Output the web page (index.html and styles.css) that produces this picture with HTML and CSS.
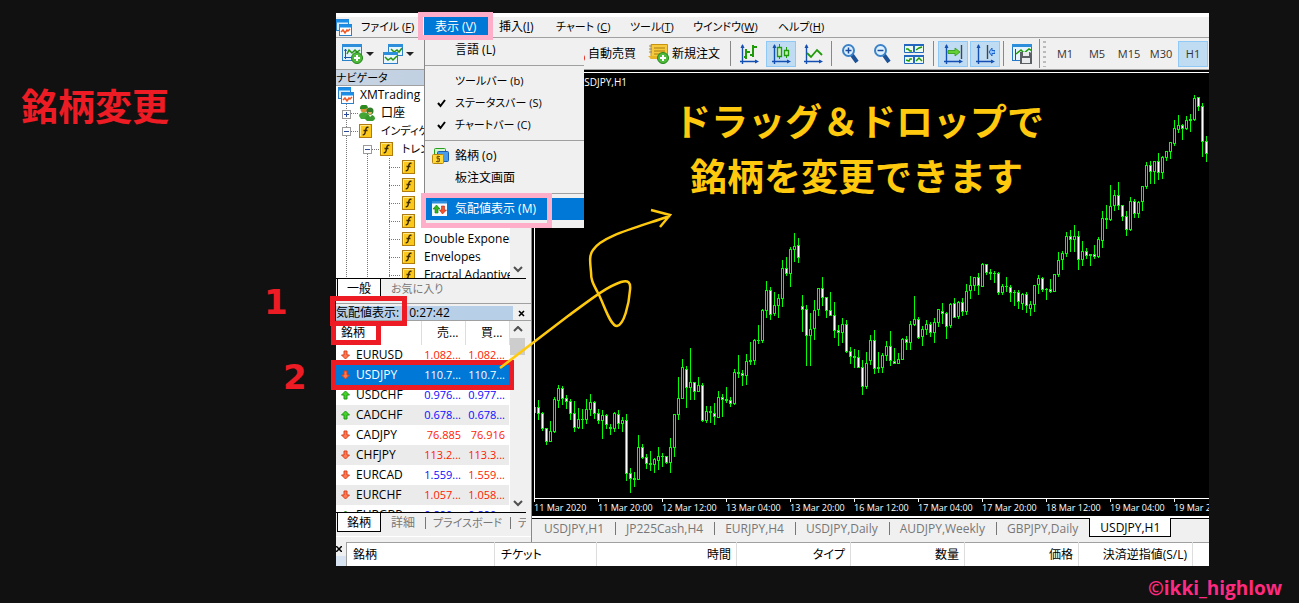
FILE: index.html
```html
<!DOCTYPE html>
<html lang="ja">
<head>
<meta charset="utf-8">
<title>銘柄変更</title>
<link rel="stylesheet" href="styles.css">
</head>
<body>
<svg class="defs" width="0" height="0" aria-hidden="true">
  <symbol id="i-f" viewBox="0 0 13 14"><rect x=".5" y=".5" width="12" height="13" fill="#fbc91c" stroke="#b07c10"/><path d="M1.5 12V1.500H11" fill="none" stroke="#ffe98a"/><path d="M9.500 3.500c-2-1-2.500.5-3 3.200-.4 2.800-.8 4.500-2.800 3.900M4.500 6.500h4" fill="none" stroke="#3a2a10" stroke-width="1.400"/></symbol>
  <symbol id="i-app" viewBox="0 0 16 17"><rect x=".5" y=".5" width="12" height="11" fill="#d6ecfb" stroke="#2d7fc8"/><path d="M0 2h13" stroke="#1b8ee8" stroke-width="3"/><rect x="3.500" y="5.500" width="12" height="11" fill="#fff" stroke="#2d7fc8"/><path d="M3 7h13" stroke="#1b8ee8" stroke-width="3"/><path d="M5 13l2-2 2 3 2-3 1 1 2-2" fill="none" stroke="#ef5a28" stroke-width="1.500"/></symbol>
  <symbol id="i-people" viewBox="0 0 16 16"><circle cx="5" cy="4" r="3.500" fill="#d9912f"/><path d="M1 4a4 4 0 018-1L6 4z" fill="#2d8a22"/><path d="M0 11c0-5 9-5 10 0l-2 3H2z" fill="#45a636"/><circle cx="11" cy="6" r="3.500" fill="#2f7e27"/><path d="M9 7h4l-1 3h-2z" fill="#eab367"/><path d="M6 14c0-6 10-6 10 0l-2 2H8z" fill="#3b9a2e"/><path d="M10 10l1 2 2-2" fill="#fff"/></symbol>
  <symbol id="i-down" viewBox="0 0 9 10"><path d="M3 1h3v4h2.500L4.500 9 .5 5H3z" fill="#ff7a52" stroke="#d8401c"/></symbol>
  <symbol id="i-up" viewBox="0 0 9 10"><path d="M3 9h3V5h2.500L4.500 1 .5 5H3z" fill="#45d02c" stroke="#1f9a12"/></symbol>
  <symbol id="i-plus" viewBox="0 0 12 12"><circle cx="6" cy="6" r="5.500" fill="#4fba3c" stroke="#24871a"/><path d="M6 3v6M3 6h6" stroke="#fff" stroke-width="2"/></symbol>
  <symbol id="i-axes" viewBox="0 0 20 20"><path d="M3.500 1v19M1 17.500h17" fill="none" stroke="#1450b4" stroke-width="1.400"/><path d="M1.500 4l2-4 2 4zM16 15.500l4 2-4 2z" fill="#1450b4"/></symbol>
</svg>
<div class="stage">
  <main class="app">
    <nav class="menubar">
      <svg width="16" height="17"><use href="#i-app"/></svg>
      <button class="kana">ファイル (<u>F</u>)</button><button class="open">表示 (<u>V</u>)</button><button>挿入(<u>I</u>)</button><button class="kana">チャート (<u>C</u>)</button><button class="kana">ツール(<u>T</u>)</button><button class="kana">ウインドウ(<u>W</u>)</button><button class="kana">ヘルプ(<u>H</u>)</button>
    </nav>
    <div class="toolbar">
      <button class="drop" aria-label="新規チャート"><svg width="21" height="20" viewBox="0 0 21 20"><rect x=".5" y=".5" width="19" height="16" fill="#dff1fc" stroke="#2d7fc8"/><path d="M0 1.500h20" stroke="#2d8fdc" stroke-width="3"/><path d="M3.500 5v10M2 13.500h12M2.500 7l1-2 1 2" fill="none" stroke="#1c5aa8"/><path d="M5 10l2-4 3 3 3-3 2 2 3-2" fill="none" stroke="#2a9410" stroke-width="1.500"/><use href="#i-plus" x="9" y="8" width="12" height="12"/></svg><i class="caret"></i></button>
      <button class="drop" aria-label="チャート切替"><svg width="20" height="20" viewBox="0 0 20 20"><rect x="5.500" y=".5" width="14" height="11" fill="#e9f6fd" stroke="#2d7fc8"/><path d="M5 1.500h15" stroke="#2d8fdc" stroke-width="3"/><path d="M8 5l3 3 3-2 2 2 3-4" fill="none" stroke="#2a9410" stroke-width="1.500"/><rect x=".5" y="8.500" width="14" height="11" fill="#e9f6fd" stroke="#2d7fc8"/><path d="M0 9.500h15" stroke="#2d8fdc" stroke-width="3"/><path d="M2 13l3 3 3-2 2 2 4-4" fill="none" stroke="#2a9410" stroke-width="1.500"/></svg><i class="caret"></i></button>
      <button class="wide auto"><svg width="20" height="20" viewBox="0 0 20 20"><path d="M2 8l8-5 8 5-8 5z" fill="#f4c430"/><circle cx="15" cy="14" r="5" fill="#e0281c"/></svg>自動売買</button>
      <button class="wide"><svg width="21" height="20" viewBox="0 0 21 20"><path d="M3 .5h16.500v14H3z" fill="#f6ca3c" stroke="#c8930e"/><path d="M0 12h14l2 3H3z" fill="#e8b428"/><path d="M6 4h11M6 7h11M6 10h8" stroke="#a87c10"/><path d="M1 2h3M1 5h3M1 8h3" stroke="#888"/><use href="#i-plus" x="9" y="8" width="12" height="12"/></svg>新規注文</button>
      <span class="sep"></span>
      <button aria-label="バーチャート"><svg width="20" height="20" viewBox="0 0 20 20"><use href="#i-axes"/><path d="M7 5v10M5 13h2M7 8h4M14 1v12M11 11h3M14 3h4" fill="none" stroke="#1f9a08" stroke-width="2"/></svg></button>
      <button class="on" aria-label="ローソク足"><svg width="20" height="20" viewBox="0 0 20 20"><use href="#i-axes"/><path d="M8.500 0v3M8.500 12v3M15.500 3v3M15.500 11v3" stroke="#1f9a08"/><path d="M6.500 3.500h4v9h-4zM13.500 6.500h4v5h-4z" fill="#c9f0b8" stroke="#1f9a08" stroke-width="1.300"/></svg></button>
      <button aria-label="ラインチャート"><svg width="20" height="20" viewBox="0 0 20 20"><use href="#i-axes"/><path d="M4 9l4 4 6-7 5 5" fill="none" stroke="#1f9a08" stroke-width="1.800"/></svg></button>
      <span class="sep"></span>
      <button aria-label="拡大"><svg width="18" height="20" viewBox="0 0 18 20"><path d="M11 11l5 7" stroke="#1c5298" stroke-width="4"/><circle cx="7.500" cy="6.500" r="5.500" fill="#dff2ff" stroke="#3b82c8" stroke-width="2"/><path d="M4.500 6.500h6M7.500 3.500v6" stroke="#1a4a9c" stroke-width="1.500"/></svg></button>
      <button aria-label="縮小"><svg width="18" height="20" viewBox="0 0 18 20"><path d="M11 11l5 7" stroke="#1c5298" stroke-width="4"/><circle cx="7.500" cy="6.500" r="5.500" fill="#dff2ff" stroke="#3b82c8" stroke-width="2"/><path d="M4.500 6.500h6" stroke="#1a4a9c" stroke-width="1.500"/></svg></button>
      <button aria-label="整列"><svg width="20" height="20" viewBox="0 0 20 20"><path d="M.5.5h9v8h-9zM10.500.5h9v8h-9zM.5 11.500h9v8h-9zM10.500 11.500h9v8h-9z" fill="#edfaf0" stroke="#2467c0"/><path d="M0 1h20M0 12h20" stroke="#2467c0" stroke-width="2"/><path d="M2 5h2l2 2h2M12 6l3-2 3-1M2 16l3 1 1-2h2M12 17l3-3 3 3" fill="none" stroke="#1f9a08" stroke-width="1.500"/></svg></button>
      <span class="sep roomy"></span>
      <button class="on" aria-label="自動スクロール"><svg width="20" height="20" viewBox="0 0 20 20"><use href="#i-axes"/><path d="M18.500 1v14" stroke="#444" stroke-width="1.400"/><path d="M5 6.500h7V4l5 4-5 4V9.500H5z" fill="#63cf32" stroke="#2c9a10" stroke-width=".8"/></svg></button>
      <button class="on" aria-label="チャートシフト"><svg width="20" height="20" viewBox="0 0 20 20"><use href="#i-axes"/><path d="M12.500 1v14" stroke="#444" stroke-width="1.400"/><path d="M20 6.500h-3V4l-3 4 3 4V9.500h3z" fill="#8ec4fa" stroke="#1b62cc"/></svg></button>
      <span class="sep"></span>
      <button aria-label="定型チャート"><svg width="20" height="20" viewBox="0 0 20 20"><rect x=".5" y=".5" width="19" height="16" fill="#e6f5fd" stroke="#2878c8"/><path d="M0 1.500h20" stroke="#2d8fdc" stroke-width="3"/><path d="M3.500 5v11" stroke="#1450b4"/><path d="M4 10l5-4 3 3 5-4 3 2" fill="none" stroke="#1f9a08" stroke-width="1.500"/><path d="M8 8h10l2 2v10H8z" fill="#5a6064"/><path d="M11 8h6v4h-6zM10 14h8v5h-8z" fill="#e8eaec"/></svg></button>
      <span class="sep dock"></span><span class="grip"></span>
      <button class="tf">M1</button><button class="tf">M5</button><button class="tf">M15</button><button class="tf">M30</button><button class="tf on">H1</button>
    </div>

    <div class="work">
      <aside class="side">
        <section>
          <h2 class="cap nav-cap kana">ナビゲータ</h2>
          <div class="scrollbox tree-box">
            <div class="tree">
              <svg class="lines" width="80" height="192"><path d="M10.500 18V192M31.500 68V192M53.500 72V192M15 27.500h8M15 45.500h8M36 63.500h8M53 81.500h12M53 99.500h12M53 117.500h12M53 135.500h12M53 153.500h12M53 171.500h12M53 189.500h12" fill="none" stroke="#777" stroke-dasharray="1 1"/><g fill="#fff" stroke="#9a9a9a"><rect x="6.500" y="24.500" width="8" height="8"/><rect x="6.500" y="41.500" width="8" height="8"/><rect x="27.500" y="59.500" width="8" height="8"/></g><path d="M8 28.500h5M10.500 26v5M8 45.500h5M29 63.500h5" stroke="#2b4b9a"/></svg>
              <div class="node l0"><svg width="16" height="17"><use href="#i-app"/></svg>XMTrading</div>
              <div class="node l1"><svg width="16" height="16"><use href="#i-people"/></svg>口座</div>
              <div class="node l1"><svg width="13" height="14"><use href="#i-f"/></svg><span class="indent kana">インディケータ</span></div>
              <div class="node l2"><svg width="13" height="14"><use href="#i-f"/></svg><span class="kana">トレンド系</span></div>
              <div class="node l3"><svg width="13" height="14"><use href="#i-f"/></svg></div>
              <div class="node l3"><svg width="13" height="14"><use href="#i-f"/></svg></div>
              <div class="node l3"><svg width="13" height="14"><use href="#i-f"/></svg></div>
              <div class="node l3"><svg width="13" height="14"><use href="#i-f"/></svg></div>
              <div class="node l3"><svg width="13" height="14"><use href="#i-f"/></svg>Double Exponential</div>
              <div class="node l3"><svg width="13" height="14"><use href="#i-f"/></svg>Envelopes</div>
              <div class="node l3"><svg width="13" height="14"><use href="#i-f"/></svg>Fractal Adaptive</div>
            </div>
            <div class="bar bottom"><svg width="10" height="7"><path d="M1 1l4 4 4-4" fill="none" stroke="#505050" stroke-width="2"/></svg></div>
          </div>
          <div class="tabs nav-tabs"><button class="cur">一般</button><button class="kana">お気に入り</button></div>
        </section>
        <section class="watch">
          <h2 class="cap watch-cap"><span>気配値表示: 10:27:42</span><button aria-label="閉じる"><svg width="7" height="7"><path d="M1 1l5 5M6 1L1 6" stroke="#000" stroke-width="1.600"/></svg></button></h2>
          <div class="scrollbox quote-box">
            <table class="quotes">
              <thead><tr><th>銘柄</th><th>売...</th><th>買...</th></tr></thead>
              <tbody>
                <tr><td><svg width="9" height="10"><use href="#i-down"/></svg>EURUSD</td><td class="r">1.082...</td><td class="r">1.082...</td></tr>
                <tr class="sel"><td><svg width="9" height="10"><use href="#i-down"/></svg>USDJPY</td><td>110.7...</td><td>110.7...</td></tr>
                <tr><td><svg width="9" height="10"><use href="#i-up"/></svg>USDCHF</td><td class="b">0.976...</td><td class="b">0.977...</td></tr>
                <tr class="alt"><td><svg width="9" height="10"><use href="#i-up"/></svg>CADCHF</td><td class="b">0.678...</td><td class="b">0.678...</td></tr>
                <tr><td><svg width="9" height="10"><use href="#i-down"/></svg>CADJPY</td><td class="r">76.885</td><td class="r">76.916</td></tr>
                <tr class="alt"><td><svg width="9" height="10"><use href="#i-down"/></svg>CHFJPY</td><td class="r">113.2...</td><td class="r">113.3...</td></tr>
                <tr><td><svg width="9" height="10"><use href="#i-down"/></svg>EURCAD</td><td class="b">1.559...</td><td class="r">1.559...</td></tr>
                <tr class="alt"><td><svg width="9" height="10"><use href="#i-down"/></svg>EURCHF</td><td class="r">1.057...</td><td class="r">1.058...</td></tr>
                <tr><td><svg width="9" height="10"><use href="#i-up"/></svg>EURGBP</td><td class="b">0.890...</td><td class="b">0.890...</td></tr>
              </tbody>
            </table>
            <div class="bar both"><svg width="10" height="7"><path d="M1 5l4-4 4 4" fill="none" stroke="#505050" stroke-width="2"/></svg><i class="thumb"></i><svg width="10" height="7"><path d="M1 1l4 4 4-4" fill="none" stroke="#505050" stroke-width="2"/></svg></div>
          </div>
          <div class="tabs watch-tabs"><button class="cur">銘柄</button><button>詳細</button><button class="kana">プライスボード</button><button class="kana">ティック</button></div>
        </section>
      </aside>

      <section class="chart">
        <div class="plot">
          <span class="chart-name">USDJPY,H1</span>
          <svg id="candles" width="100%" height="425"></svg>
        </div>
        <div class="times"><span>11 Mar 2020</span><span>11 Mar 20:00</span><span>12 Mar 12:00</span><span>13 Mar 04:00</span><span>13 Mar 20:00</span><span>16 Mar 12:00</span><span>17 Mar 04:00</span><span>17 Mar 20:00</span><span>18 Mar 12:00</span><span>19 Mar 04:00</span><span>19 Mar 20:00</span></div>
        <div class="chart-tabs"><button>USDJPY,H1</button><button>JP225Cash,H4</button><button>EURJPY,H4</button><button>USDJPY,Daily</button><button>AUDJPY,Weekly</button><button>GBPJPY,Daily</button><button class="cur">USDJPY,H1</button></div>
      </section>
    </div>

    <div class="terminal">
      <div class="rail"><button aria-label="閉じる"><svg width="6" height="6"><path d="M0 0l6 6M6 0L0 6" stroke="#000" stroke-width="1.500"/></svg></button></div>
      <table class="orders"><thead><tr><th>銘柄</th><th>チケット</th><th>時間</th><th>タイプ</th><th>数量</th><th>価格</th><th>決済逆指値(S/L)</th><th></th></tr></thead></table>
    </div>
  </main>

  <div class="popup" role="menu">
    <button>言語 (L)</button>
    <hr class="first">
    <button class="kana">ツールバー (b)</button>
    <button class="kana"><svg width="9" height="9"><path d="M1 4l2.500 3L8 1" fill="none" stroke="#000" stroke-width="2"/></svg>ステータスバー (S)</button>
    <button class="kana"><svg width="9" height="9"><path d="M1 4l2.500 3L8 1" fill="none" stroke="#000" stroke-width="2"/></svg>チャートバー (C)</button>
    <hr>
    <button><svg width="17" height="16" viewBox="0 0 17 16"><rect x="2.500" y=".5" width="11" height="9" rx="1" fill="#d5f6d0" stroke="#26a01c"/><rect x="5.500" y="3.500" width="11" height="10" rx="1" fill="#4a9ce8" stroke="#1c5ab0"/><rect x=".5" y="6.500" width="11" height="9" rx="1" fill="#ffd83c" stroke="#b88608"/><path d="M8 8.500H5v2h2.500v3H4M6 7.500v7" fill="none" stroke="#7c5804"/></svg>銘柄 (o)</button>
    <button>板注文画面</button>
    <hr>
    <button class="hot"><svg width="15" height="15" viewBox="0 0 15 15"><path d="M0 0h15v15H0z" fill="#f4fbff"/><path d="M0 1h15" stroke="#2d8fdc" stroke-width="3"/><path d="M4.500 4L1 8h2v4h3V8h2z" fill="#2fb81e" stroke="#147a0a" stroke-width=".6"/><path d="M10.500 13L7.500 9h2V5h3v4h2z" fill="#f0532e" stroke="#b82610" stroke-width=".6"/></svg>気配値表示 (M)</button>
  </div>

  <div class="mark pink m1"></div>
  <div class="mark pink m2"></div>
  <div class="mark red m3"></div>
  <div class="mark red m4"></div>
  <div class="mark red m5"></div>
  <svg class="stroke" width="200" height="180" viewBox="490 200 200 180"><path d="M500 368L568 316C590 300 606 287 621 282C628 280 631 282 630 290C629 304 624 325 617 326C610 326 604 304 598 293C592 282 591 279 591 272C590 262 589 255 593 250C602 236 635 228 670 216M651 210l19 5-10 12" fill="none" stroke="#ffc90e" stroke-width="2.500"/></svg>
  <h1 class="note title">銘柄変更</h1>
  <span class="note n1">1</span>
  <span class="note n2">2</span>
  <p class="note tip t1">ドラッグ＆ドロップで</p>
  <p class="note tip t2">銘柄を変更できます</p>
  <span class="note credit">©ikki_highlow</span>
</div>
<script src="chart.js"></script>
</body>
</html>
```

FILE: styles.css
```css
* { box-sizing: border-box; }
body { margin: 0; background: #111; color: #000; font: 12px/16px "Open Sans", "Noto Sans CJK JP", sans-serif; font-feature-settings: "palt"; }
button { font: inherit; font-feature-settings: inherit; color: inherit; background: none; border: 0; padding: 0; white-space: nowrap; text-align: left; }
svg { display: block; flex: none; }
h1, h2, p { margin: 0; font: inherit; }
.kana { font-size: 11px; }
.defs { position: absolute; }
.stage { position: relative; min-height: 100vh; padding: 13px 90px 37px 336px; overflow: hidden; }
.app { background: #f0f0f0; overflow: hidden; }

.menubar { display: grid; grid-template-columns: 25px 63px 75px 57px 74px 63px 85px 1fr; height: 25px; border-top: 4px solid #fff; border-bottom: 1px solid #a0a0a0; align-items: center; }
.menubar .open { justify-self: start; align-self: start; width: 64px; height: 19px; padding-left: 11px; color: #fff; background: #0078d7; }

.toolbar { display: flex; align-items: center; gap: 2px; height: 32px; padding: 0 1px; border-bottom: 1px solid #a0a0a0; overflow: hidden; }
.toolbar button { display: flex; flex: none; align-items: center; justify-content: center; width: 30px; height: 26px; }
.toolbar .drop { width: 39px; justify-content: flex-start; gap: 3px; padding-left: 5px; }
.caret { border: 4px solid transparent; border-top-color: #222; border-bottom: 0; }
.toolbar .wide { width: auto; gap: 3px; }
.toolbar .auto { margin: 0 10px 0 146px; }
.toolbar .on { background: #c0dcf3; border: 1px solid #90c8f6; }
.toolbar .tf { color: #333; font-size: 11px; }
.sep { flex: none; width: 1px; height: 25px; margin: 0 1px; background: #888; }
.sep.roomy { margin: 0 2px; }
.toolbar .wide + .sep { margin-left: 8px; }
.sep.dock { height: 29px; margin: 0; }
.grip { flex: none; width: 3px; height: 26px; margin: 0 2px 0 1px; background: repeating-linear-gradient(#bbb 0 2px, #f0f0f0 2px 5px); }

.work { display: flex; height: 472px; }
.side { flex: none; width: 195px; height: 467px; border-bottom: 1px solid #fff; }
.cap { display: flex; align-items: center; white-space: nowrap; border-bottom: 1px solid #a0a0a0; }
.nav-cap { height: 16px; background: linear-gradient(90deg, #c8d4e2, #b8cce2); }
.scrollbox { display: flex; width: 190px; overflow: hidden; background: #fff; }
.tree-box { height: 192px; }
.tree { position: relative; flex: none; width: 174px; overflow: hidden; }
.lines { position: absolute; left: 0; top: 0; }
.node { display: flex; align-items: center; height: 18px; gap: 6px; white-space: nowrap; }
.l0 { padding-left: 2px; }
.l1 { padding-left: 23px; }
.l2 { padding-left: 44px; gap: 9px; }
.l3 { padding-left: 66px; gap: 9px; }
.indent { padding-left: 3px; }
.bar { display: flex; flex-direction: column; align-items: center; width: 16px; padding: 5px 0; background: #f0f0f0; }
.bar.bottom { justify-content: flex-end; }
.both svg:last-child { margin-top: auto; }
.thumb { width: 15px; height: 17px; margin-top: 5px; background: #cdcdcd; }
.tabs { display: flex; width: 190px; height: 22px; overflow: hidden; border-top: 1px solid #000; color: #777; }
.tabs button { flex: none; height: 19px; padding: 0 10px; line-height: 17px; }
.tabs .cur { margin-top: -1px; margin-left: 1px; height: 20px; padding: 1px 9px 0; background: #fff; border: 1px solid #000; border-top: 0; color: #000; }
.nav-tabs .cur { border-bottom: 0; }
.watch { margin-top: 3px; padding-top: 2px; border-top: 1px solid #a0a0a0; }
.watch-cap { height: 15px; justify-content: space-between; padding-right: 6px; }
.watch-cap span { width: 177px; height: 14px; line-height: 13px; background: #b8cfe8; }
.quote-box { height: 191px; align-items: stretch; }
.quotes { flex: none; width: 173px; border-collapse: collapse; table-layout: fixed; align-self: flex-start; }
.quotes th { width: 44px; height: 24px; padding: 0 6px 0 5px; border-right: 1px solid #ddd; font-weight: 400; text-align: right; }
.quotes th:first-child { width: 85px; text-align: left; }
.quotes td { height: 20px; padding: 0 4px 0 0; text-align: right; font-size: 11px; }
.quotes td:first-child { display: flex; align-items: center; gap: 6px; padding-left: 5px; font-size: 12px; }
.quotes .alt { background: #ebebeb; }
.quotes .sel { background: #0078d7; color: #fff; }
.r { color: #ff1a00; }
.b { color: #0a0aff; }
.watch-tabs button { position: relative; }
.watch-tabs .kana { padding: 0 8px; }
.watch-tabs .kana::before { content: ""; position: absolute; left: 0; top: 4px; height: 12px; border-left: 1px solid #777; }

.chart { flex: 1; min-width: 0; padding-left: 2px; border-left: 1px solid #888; background: linear-gradient(#000 448px, #f0f0f0 448px); }
.plot { position: relative; margin-top: 2px; height: 427px; border-top: 1px solid #fff; border-left: 1px solid #fff; border-bottom: 1px solid #fff; overflow: hidden; }
.chart-name { position: absolute; left: 42px; top: 1px; color: #fff; font-size: 10px; }
.times { display: flex; height: 17px; overflow: hidden; color: #fff; font-size: 9px; line-height: 18px; }
.times span { position: relative; flex: none; width: 64px; white-space: nowrap; }
.times span::before { content: ""; position: absolute; left: 0; top: 0; height: 3px; border-left: 1px solid #fff; }
.chart-tabs { display: flex; margin-left: -2px; padding-left: 1px; height: 21px; border-top: 2px solid #fff; box-shadow: inset 0 1px #000; background: #f0f0f0; color: #777; }
.chart-tabs button { flex: none; position: relative; height: 19px; padding: 2px 11px 0; line-height: 16px; }
.chart-tabs button + button:not(.cur)::before { content: ""; position: absolute; left: 0; top: 4px; height: 13px; border-left: 1px solid #777; }
.chart-tabs .cur { padding: 1px 10px 0; background: #fff; border: 1px solid #000; border-top: 0; color: #000; }

.terminal { display: flex; height: 24px; }
.rail { flex: none; width: 10px; background: linear-gradient(#f0f0f0 14px, #d9e4f3 14px); overflow: hidden; }
.rail button { display: block; margin-top: 4px; }
.orders { width: 100%; height: 24px; table-layout: fixed; border-collapse: collapse; background: #fff; border-top: 1px solid #a0a0a0; border-left: 1px solid #a0a0a0; }
.orders th { padding: 0 5px 0 6px; border-right: 1px solid #ddd; font-weight: 400; text-align: right; white-space: nowrap; width: 114px; }
.orders th:nth-child(1) { width: 148px; text-align: left; }
.orders th:nth-child(2) { width: 102px; text-align: left; }
.orders th:nth-child(3) { width: 140px; }
.orders th:last-child { width: auto; border: 0; }

.popup { position: absolute; left: 424px; top: 39px; width: 160px; padding-bottom: 8px; background: #f0f0f0; border-left: 1px solid #888; }
.popup button { position: relative; display: block; width: 100%; height: 22px; padding-left: 30px; line-height: 22px; }
.popup svg { position: absolute; left: 7px; top: 3px; }
.popup svg[width="9"] { left: 12px; top: 7px; }
.popup hr { margin: 4px 0; border: 0; border-top: 1px solid #a0a0a0; }
.popup hr.first { margin: 4px 0 4px; }
.popup .hot { background: #0078d7; color: #fff; }

.mark { position: absolute; border: 5px solid; }
.pink { border-color: #ffaec9; }
.red { border-color: #ed1c24; }
.m1 { left: 418px; top: 12px; width: 75px; height: 28px; }
.m2 { left: 421px; top: 193px; width: 131px; height: 35px; }
.m3 { left: 330px; top: 296px; width: 77px; height: 30px; }
.m4 { left: 331px; top: 321px; width: 50px; height: 24px; }
.m5 { left: 331px; top: 360px; width: 183px; height: 30px; }
.stroke { position: absolute; left: 490px; top: 200px; }
.note { position: absolute; white-space: nowrap; font-family: "Noto Sans CJK JP", sans-serif; font-weight: 700; font-size: 37px; line-height: 40px; font-feature-settings: normal; }
.title { left: 21px; top: 85px; color: #ed1c24; }
.n1, .n2 { color: #ed1c24; font-family: "DejaVu Sans", sans-serif; font-size: 34px; }
.n1 { left: 264px; top: 282px; }
.n2 { left: 283px; top: 357px; }
.tip { color: #ffc90e; }
.t1 { left: 674px; top: 100px; }
.t2 { left: 690px; top: 155px; }
.credit { left: 1148px; top: 576px; color: #ff2a7f; font-family: "Open Sans", sans-serif; font-size: 19px; line-height: 24px; }
```

FILE: chart.js
```js
// One candle per entry: high, body top, body bottom, low, 1 = falling (filled).
var candles = [
[407,407,413,413,1],[400,407,414,420,1],[412,413,429,431,1],[428,428,442,445,1],[421,431,442,442,0],[397,399,432,433,0],[385,388,401,408,0],[386,388,399,405,1],[395,398,402,409,1],[399,401,414,420,1],
[401,413,428,432,1],[408,419,428,429,0],[409,419,420,429,0],[399,409,420,424,0],[394,402,410,416,0],[401,402,414,419,1],[409,413,421,424,1],[410,415,421,439,0],[414,415,425,429,1],[424,427,429,435,1],
[412,413,429,432,0],[410,414,424,429,1],[417,420,424,432,0],[414,420,474,481,1],[468,473,479,493,1],[472,478,480,487,0],[435,447,480,480,0],[444,447,458,459,1],[454,457,464,469,1],[451,463,465,471,0],
[458,459,465,473,0],[447,456,461,470,0],[453,456,457,467,0],[456,456,463,464,1],[438,447,463,473,0],[414,414,448,457,0],[377,398,415,420,0],[359,367,399,399,0],[366,369,388,408,1],[348,382,388,400,0],
[382,382,392,400,1],[377,385,392,392,0],[383,385,421,422,1],[406,411,421,423,0],[406,411,413,423,0],[403,413,417,425,1],[391,397,418,418,0],[394,397,400,417,1],[387,399,401,403,1],[397,400,404,407,1],
[369,372,404,405,0],[355,372,374,378,0],[370,373,376,386,1],[354,361,376,385,0],[342,360,362,365,0],[339,340,361,365,0],[325,340,341,344,0],[309,310,341,343,0],[281,290,311,318,0],[287,290,315,320,1],
[292,305,314,316,0],[294,298,306,318,0],[260,268,299,307,0],[257,268,274,276,1],[247,249,274,287,0],[233,246,250,262,0],[238,245,258,263,1],[295,306,310,332,1],[305,309,336,366,1],[313,329,336,366,0],
[300,310,329,340,0],[288,288,310,316,0],[277,288,298,306,1],[297,297,311,318,1],[292,310,316,316,1],[302,315,331,338,1],[325,330,333,346,1],[318,324,333,343,0],[320,324,352,353,1],[347,351,357,364,1],
[349,356,358,368,0],[350,357,368,368,1],[360,367,387,395,1],[352,363,387,389,0],[335,340,361,365,0],[330,340,369,374,1],[352,367,369,373,0],[353,355,368,373,0],[341,346,356,361,0],[331,346,361,366,1],
[348,361,364,364,1],[353,359,364,364,0],[338,339,360,360,0],[336,339,343,350,1],[321,324,343,350,0],[296,319,325,326,0],[317,319,338,339,1],[326,329,337,346,0],[320,324,330,335,0],[322,324,333,337,1],
[318,322,333,343,0],[309,309,323,327,0],[303,311,314,324,1],[312,313,327,339,1],[303,304,326,328,0],[298,303,318,318,1],[301,302,317,319,0],[298,302,312,316,1],[284,291,312,315,0],[276,285,291,299,0],
[277,277,286,291,0],[273,277,286,295,1],[263,264,287,287,0],[264,264,273,275,1],[269,272,274,280,0],[271,273,274,283,0],[272,273,293,295,1],[284,286,293,295,0],[277,286,287,292,0],[285,287,293,302,1],
[290,292,293,306,0],[290,292,302,309,1],[293,294,304,310,0],[292,294,306,313,1],[301,304,309,316,0],[285,285,305,312,0],[275,278,285,294,0],[277,278,290,292,1],[288,289,290,300,0],[279,289,292,293,1],
[274,274,292,292,0],[252,260,275,277,0],[251,253,260,270,0],[232,236,254,257,0],[230,236,240,252,1],[225,236,240,252,0],[231,236,260,270,1],[241,251,260,266,0],[248,251,256,259,1],[254,254,256,266,0],
[245,254,257,259,1],[237,239,257,258,0],[211,218,241,248,0],[205,218,220,229,0],[185,206,220,221,0],[190,195,206,211,0],[182,195,206,210,1],[205,205,217,221,1],[211,216,230,236,1],[197,201,230,231,0],
[199,201,214,218,1],[201,202,214,218,0],[186,186,202,211,0],[162,165,187,189,0],[161,165,172,184,1],[161,161,172,184,0],[153,161,173,180,1],[156,157,173,179,0],[151,151,158,161,0],[142,142,152,159,0],
[120,128,144,146,0],[115,125,130,133,0],[124,125,129,140,1],[116,120,129,130,0],[114,119,121,132,0],[95,98,120,121,0],[97,97,107,111,1],[103,106,142,157,1],[136,141,154,162,1]
];
var STEP = 4, TOP = 73;
function rect(x, y, w, h, fill) {
  return '<rect x="' + x + '" y="' + (y - TOP) + '" width="' + w + '" height="' + h + '" fill="' + fill + '"/>';
}
document.getElementById('candles').innerHTML = candles.map(function (c, i) {
  var x = i * STEP - 1;
  var out = rect(x, c[0], 1, c[3] - c[0], '#0f0') + rect(x - 1, c[1], 3, c[2] - c[1], '#0f0');
  if (c[2] - c[1] > 2) out += rect(x, c[1] + 1, 1, c[2] - c[1] - 2, c[4] ? '#fff' : '#000');
  return out;
}).join('');
```
